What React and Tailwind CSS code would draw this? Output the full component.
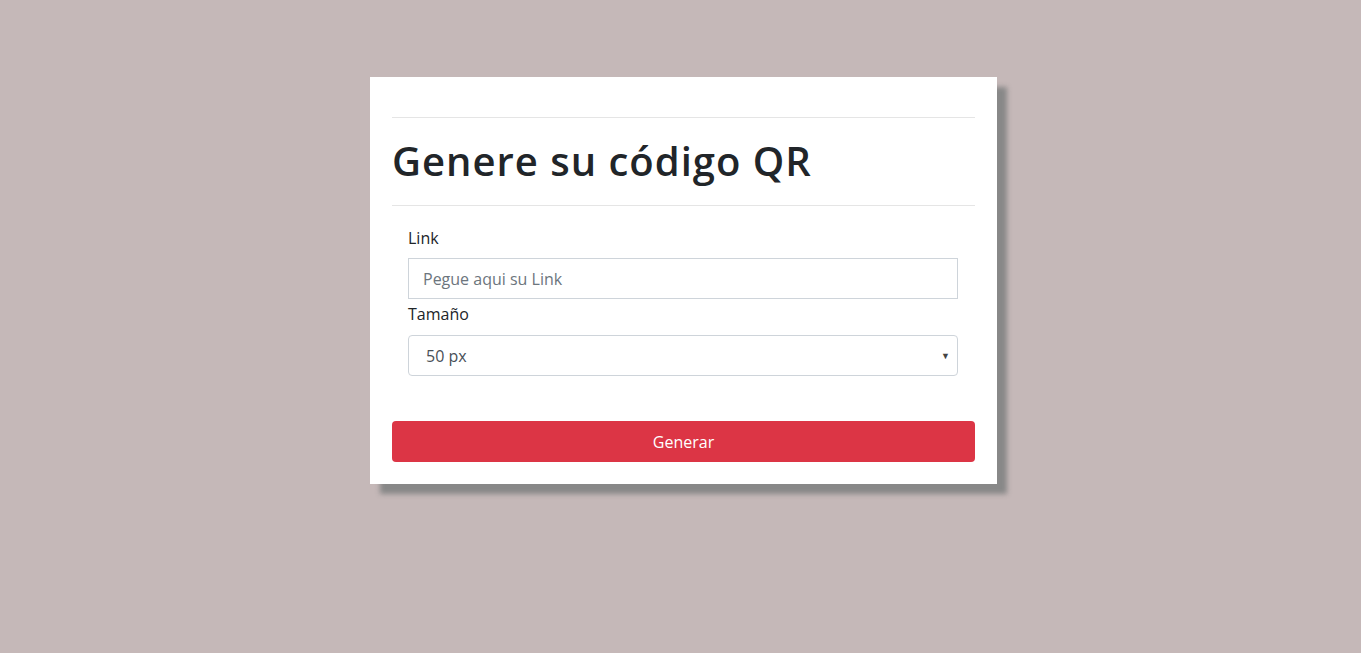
import React from 'react'

const font = { fontFamily: '"Open Sans", "Noto Sans", sans-serif' }

export default function App() {
  return (
    <div className="min-h-[653px] w-full bg-[#c5b8b8] pt-[77px]" style={font}>
      <div className="ml-[370px] w-[627px] bg-white px-[22px] pt-[40px] pb-[22px] shadow-[10px_10px_5px_#888]">
        <hr className="border-t border-[#e5e5e5]" />
        <h1 className="mt-[19px] mb-[20px] text-[40px] leading-[48px] font-semibold text-[#212529] tracking-[1px]">
          Genere su código QR
        </h1>
        <hr className="border-t border-[#e5e5e5]" />

        <form className="pl-4 pr-[17px] pt-[20px]">
          <label className="block text-base leading-[24px] text-[#212529]">Link</label>
          <input
            type="text"
            placeholder="Pegue aqui su Link"
            className="mt-[8px] block h-[41px] w-full border border-[#ced4da] px-[14px] text-base text-[#495057] placeholder:text-[#6c757d] outline-none"
          />
          <label className="mt-[3px] block text-base leading-[24px] text-[#212529]">Tamaño</label>
          <div className="relative mt-[9px]">
            <select className="block h-[41px] w-full appearance-none rounded-[4px] border border-[#ced4da] bg-white px-[17px] text-base text-[#495057] outline-none">
              <option>50 px</option>
              <option>100 px</option>
              <option>200 px</option>
            </select>
            <span className="pointer-events-none absolute right-[8px] top-[14px] text-[9px] text-[#444]">▼</span>
          </div>
        </form>

        <button
          type="button"
          className="mt-[45px] block h-[41px] w-full rounded-[4px] bg-[#dc3545] text-base text-white"
        >
          Generar
        </button>
      </div>
    </div>
  )
}
